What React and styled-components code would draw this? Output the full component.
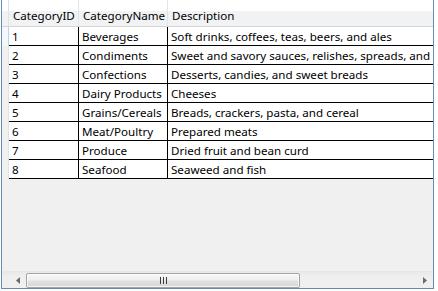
import React from 'react';
import styled, { createGlobalStyle } from 'styled-components';

const GlobalStyle = createGlobalStyle`
  html, body {
    margin: 0;
    padding: 0;
    background: #ffffff;
  }
`;

const categories = [
  { id: 1, name: 'Beverages', description: 'Soft drinks, coffees, teas, beers, and ales' },
  { id: 2, name: 'Condiments', description: 'Sweet and savory sauces, relishes, spreads, and seasonings' },
  { id: 3, name: 'Confections', description: 'Desserts, candies, and sweet breads' },
  { id: 4, name: 'Dairy Products', description: 'Cheeses' },
  { id: 5, name: 'Grains/Cereals', description: 'Breads, crackers, pasta, and cereal' },
  { id: 6, name: 'Meat/Poultry', description: 'Prepared meats' },
  { id: 7, name: 'Produce', description: 'Dried fruit and bean curd' },
  { id: 8, name: 'Seafood', description: 'Seaweed and fish' },
];

const columns = [
  { key: 'id', title: 'CategoryID', width: 70 },
  { key: 'name', title: 'CategoryName', width: 89 },
  { key: 'description', title: 'Description', width: 420 },
];

const Frame = styled.div`
  box-sizing: border-box;
  width: 433px;
  height: 289px;
  margin-left: 1px;
  border: 1px solid #688caf;
  border-top: none;
  background: #f0f0f0;
  display: flex;
  flex-direction: column;
  overflow: hidden;
  font-family: 'Noto Sans', 'Open Sans', sans-serif;
  font-size: 11.6px;
  color: #000;
`;

const Viewport = styled.div`
  flex: 1;
  overflow: hidden;
`;

const HeaderRow = styled.div`
  display: flex;
  box-sizing: border-box;
  height: 27px;
  border-bottom: 1px solid #d5d5d5;
  background: linear-gradient(to bottom, #ffffff 0%, #ffffff 42%, #f1f2f4 43%, #f1f2f4 100%);
`;

const Corner = styled.div`
  flex: none;
  box-sizing: border-box;
  width: 7px;
  border-right: 1px solid #dbe3ec;
`;

const HeaderCell = styled.div`
  flex: none;
  box-sizing: border-box;
  width: ${(p) => p.$width}px;
  padding: 4px 0 0 4px;
  border-right: 1px solid #e1e3e6;
  display: flex;
  align-items: center;
  white-space: nowrap;
  overflow: hidden;
`;

const Row = styled.div`
  display: flex;
  height: 19px;
`;

const RowHeader = styled.div`
  flex: none;
  box-sizing: border-box;
  width: 7px;
  border-right: 1px solid ${(p) => (p.$current ? '#bcd3ea' : '#dbe3ec')};
  background: ${(p) => (p.$current ? '#f4f8fc' : '#f0f0f0')};
`;

const Cells = styled.div`
  flex: 1;
  display: flex;
  background: #ffffff;
  border-bottom: 1px solid #000;
`;

const Cell = styled.div`
  flex: none;
  box-sizing: border-box;
  width: ${(p) => p.$width}px;
  padding-left: 3px;
  border-right: 1px solid #000;
  display: flex;
  align-items: center;
  white-space: nowrap;
  overflow: hidden;
`;

const ScrollBar = styled.div`
  flex: none;
  display: flex;
  height: 17px;
  box-sizing: border-box;
  padding-left: 7px;
  border-top: 1px solid #e6e6e6;
  background: linear-gradient(to bottom, #e9e9e9 0%, #efefef 30%, #f0f0f0 100%);
`;

const ArrowButton = styled.div`
  flex: none;
  width: 17px;
  display: flex;
  align-items: center;
  justify-content: center;
`;

const Track = styled.div`
  flex: 1;
  display: flex;
  align-items: center;
  padding: 0 ${(p) => p.$rightGap}px 0 0;
`;

const Thumb = styled.div`
  box-sizing: border-box;
  height: 15px;
  border: 1px solid #a4a4a4;
  border-radius: 2px;
  background: linear-gradient(to bottom, #f7f7f7 0%, #efefef 48%, #e1e1e1 52%, #d6d6d6 100%);
  box-shadow: inset 0 0 0 1px rgba(255, 255, 255, 0.75);
  display: flex;
  align-items: center;
  justify-content: center;
`;

const Arrow = ({ dir }) => (
  <svg width="4" height="7" viewBox="0 0 4 7">
    {dir === 'left' ? (
      <path d="M4 0 L0 3.5 L4 7 Z" fill="#6b6b6b" />
    ) : (
      <path d="M0 0 L4 3.5 L0 7 Z" fill="#6b6b6b" />
    )}
  </svg>
);

const Grip = () => (
  <svg width="7" height="7" viewBox="0 0 7 7">
    <rect x="0" y="0" width="1" height="7" fill="#3c3c3c" />
    <rect x="3" y="0" width="1" height="7" fill="#3c3c3c" />
    <rect x="6" y="0" width="1" height="7" fill="#3c3c3c" />
  </svg>
);

const App = () => (
  <>
    <GlobalStyle />
    <Frame>
      <Viewport>
        <HeaderRow>
          <Corner />
          {columns.map((c) => (
            <HeaderCell key={c.key} $width={c.width}>
              {c.title}
            </HeaderCell>
          ))}
        </HeaderRow>
        {categories.map((row, i) => (
          <Row key={row.id}>
            <RowHeader $current={i === 0} />
            <Cells>
              {columns.map((c) => (
                <Cell key={c.key} $width={c.width}>
                  {row[c.key]}
                </Cell>
              ))}
            </Cells>
          </Row>
        ))}
      </Viewport>
      <ScrollBar>
        <ArrowButton>
          <Arrow dir="left" />
        </ArrowButton>
        <Track $rightGap={116}>
          <Thumb style={{ width: 274 }}>
            <Grip />
          </Thumb>
        </Track>
        <ArrowButton>
          <Arrow dir="right" />
        </ArrowButton>
      </ScrollBar>
    </Frame>
  </>
);

export default App;
